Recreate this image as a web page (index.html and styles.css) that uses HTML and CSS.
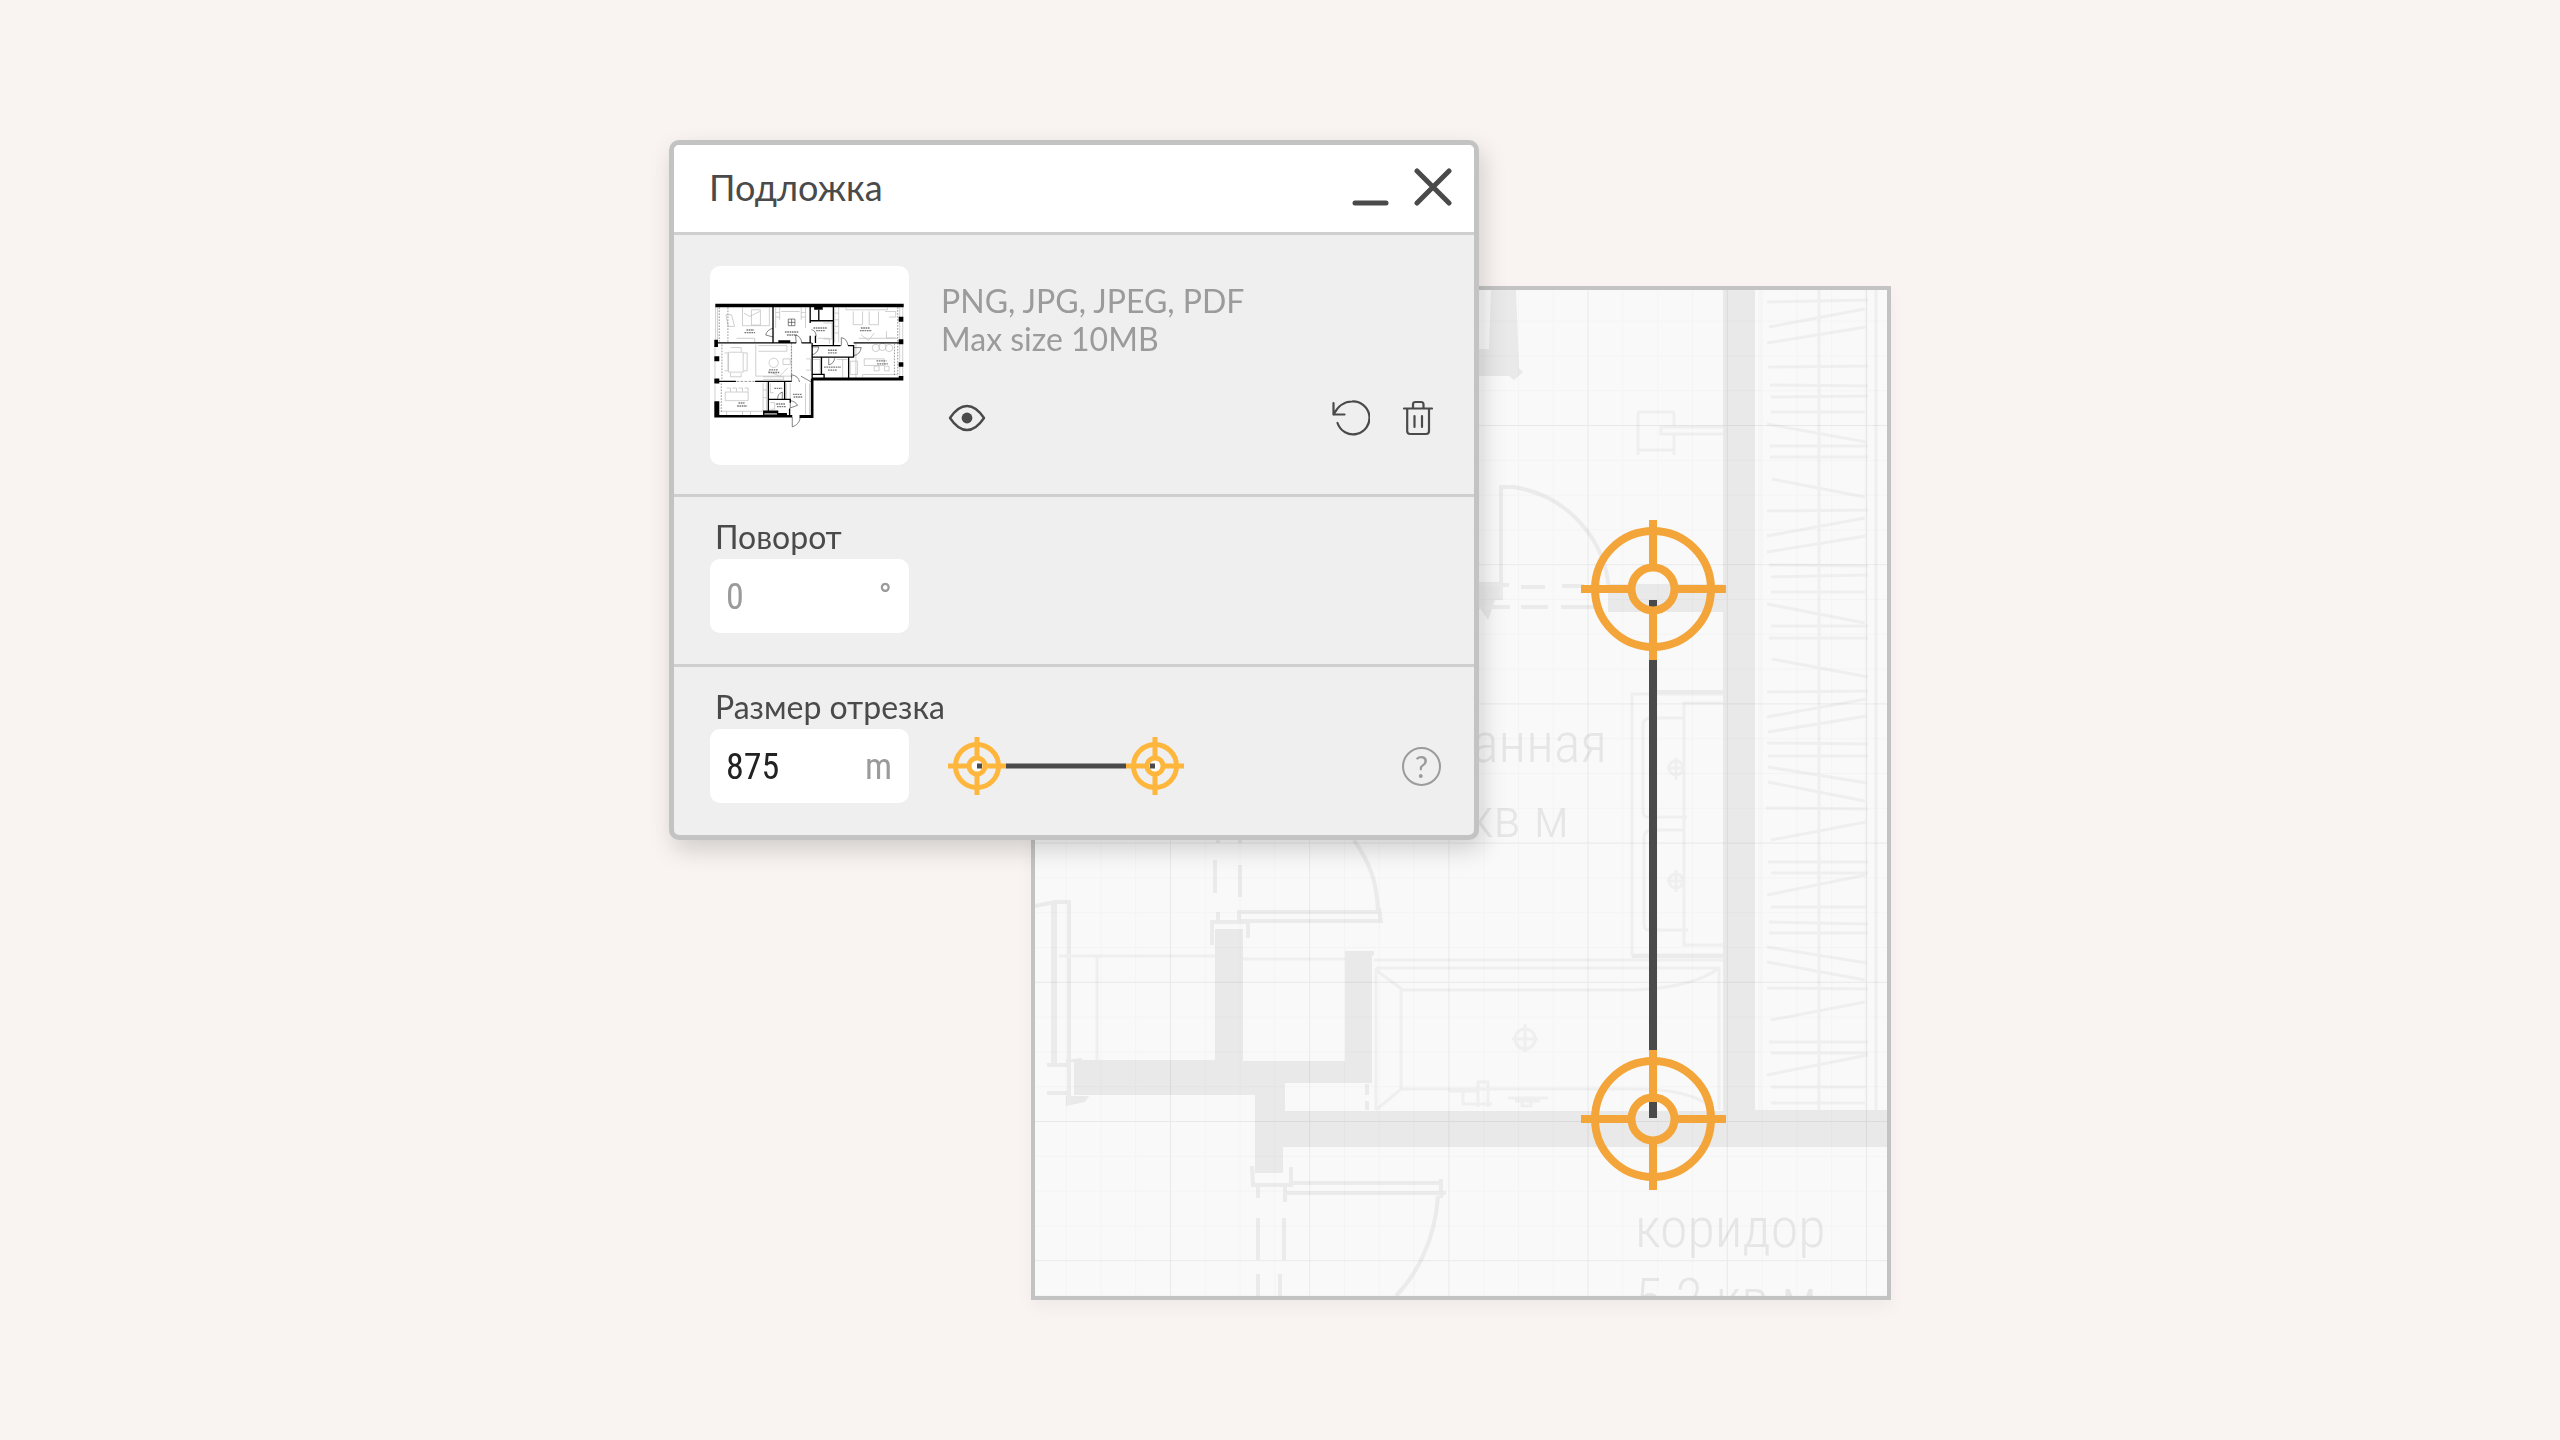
FILE: index.html
```html
<!DOCTYPE html>
<html lang="ru">
<head>
    <meta charset="UTF-8">
    <meta name="viewport" content="width=device-width, initial-scale=1.0">
    <title>Подложка</title>
    <link rel="stylesheet" href="styles.css">
</head>
<body>
    <main class="scene">
        <div class="plan">
            <svg class="plan-drawing" viewBox="0 0 852 1006" role="img" aria-label="План помещения">
                <defs>
                    <pattern id="grid-minor" x="30.6" y="30.6" width="34.8" height="34.8" patternUnits="userSpaceOnUse">
                        <path d="M0 .5H34.8M.5 0V34.8" stroke="#fafafa" fill="none"/>
                    </pattern>
                    <pattern id="grid-major" x="135" y="135" width="139.2" height="139.2" patternUnits="userSpaceOnUse">
                        <path d="M0 .5H139.2M.5 0V139.2" stroke="#f4f4f4" fill="none"/>
                    </pattern>
                    <g id="target">
                        <circle r="58"/>
                        <circle r="21.5"/>
                        <path d="M-72 0H-21M21 0H73M0 -69V-21M0 21V71"/>
                    </g>
                </defs>

                <!-- walls -->
                <g class="walls">
                    <path d="M688 0H720V820H852V857H248V883H220V805H39V770H180V639H208V771H310V661H339V665L337 666V793H250V821H688V322H573V294H688Z"/>
                    <path d="M456 0H481L484 78L488 82L479 90L474 86H420V59H454Z"/>
                    <path d="M420 292H468V310H460L453 330L445 318H420Z"/>
                    <path d="M31 770L47 768V772H31ZM31 806H54L50 812L31 816Z"/>
                </g>

                <!-- doors and openings -->
                <g class="lines lines-thick">
                    <path d="M466 197V307"/>
                    <path d="M464 197H478A112 112 0 0 1 574 300"/>
                    <path d="M440 295H474M486 297H510M527 296H549M440 317H475M486 317H513M526 317H560"/>
                    <path d="M204 622H346M204 631H346M204 620V634M344 618L346 633"/>
                    <path d="M319 550C334 572 342 590 343 622"/>
                    <path d="M177 655V632H213V648M183 622V632"/>
                    <path d="M180 570V603M205 575V607M183 550V553M205 550V553"/>
                    <path d="M217 876L218 895H256V877M223 895V908M250 895V912"/>
                    <path d="M256 893H406M252 903H411M406 889V908"/>
                    <path d="M403 906C400 950 382 984 361 1006"/>
                    <path d="M223 928V970M249 928V970M223 984V1006M245 984V1006"/>
                    <path d="M332 794V805M332 811V820"/>
                    <path d="M0 616L20 612H34V815M12 775H36M12 803H34"/>
                </g>
                <path class="lines lines-heavy" d="M19 612V775"/>

                <!-- bathroom fittings -->
                <g class="lines">
                    <path d="M603 122V165M639 122V137M639 144V165M603 122H639M603 160H639M688 137H626V144H688"/>
                    <path d="M688 404H597V665H688M688 413H649V655H688"/>
                    <path d="M649 428H616Q608 428 608 436V519Q608 527 612 527H652"/>
                    <path d="M649 540H617Q609 540 609 548V632Q609 640 613 640H653"/>
                    <circle cx="641" cy="478" r="7"/>
                    <circle cx="641" cy="591" r="7"/>
                    <path d="M641 468V490M632 478H649M641 580V602M632 591H649"/>
                    <path d="M339 670H688M341 678H684V820M341 678V820M341 680L368 700H600Q660 697 684 678M366 700V799M341 820L366 799H600Q655 799 676 817"/>
                    <circle cx="490" cy="749" r="10"/>
                    <path d="M490 734V762M477 749H503"/>
                    <path d="M443 817V792H453V817M443 801H428V814H457M414 801H428M473 808H513M480 811H505M487 812V816H496V812"/>
                    <path d="M24 666H180M62 666V770M208 669H310"/>
                </g>
                <path class="lines lines-thick" d="M622 402H688M597 666H688"/>

                <!-- wardrobe -->
                <path class="lines" d="M784 0V820M841 0V820"/>
                <path class="lines lines-faint" d="M725 0V820M831 0V820"/>
                <path class="lines" d="M732 12L833 10M734 37L830 19M732 53L831 37M733 77L833 76M735 95L833 96M736 107L833 106M736 122H830M732 134L831 152M735 156H833M735 167H833M737 189L830 207M732 221L833 220M732 246L830 228M732 262L831 246M734 275L833 276M736 287L833 285M736 302H830M732 314L830 333M736 336H833M734 348H833M737 369L833 387M732 402L833 401M732 427L831 409M733 442L832 426M732 453L833 454M733 466H833M733 477L832 493M733 492L830 511M731 518L833 519M736 550L831 532M733 572H833M736 583H833M732 605L831 585M736 617H831M734 632L833 634M734 643H833M732 657L832 673M732 672L830 690M732 698L833 699M736 730L830 712M734 752H833M736 763H833M732 785L833 765M736 797H831M736 813H830"/>

                <g class="room">
                    <text x="572" y="472" text-anchor="end">ванная</text>
                    <text x="534" y="547" text-anchor="end">кв м</text>
                    <text x="600" y="957">коридор</text>
                    <text x="600" y="1028">5.2 кв м</text>
                </g>

                <rect width="852" height="1006" fill="url(#grid-minor)" class="grid"/>
                <rect width="852" height="1006" fill="url(#grid-major)" class="grid"/>

                <!-- measured segment -->
                <path class="segment" d="M618 310V828"/>
                <path class="segment-gap" d="M618 317V370M618 760V812"/>
                <use href="#target" class="target" x="618" y="299"/>
                <use href="#target" class="target" x="618" y="829"/>
            </svg>
        </div>

        <section class="panel">
            <header class="panel-header">
                <h1 class="panel-title">Подложка</h1>
                <div class="panel-controls">
                    <button class="icon-btn" type="button" aria-label="Свернуть">
                        <svg width="38" height="38" viewBox="0 0 38 38"><path d="M4 35H35" stroke-width="5"/></svg>
                    </button>
                    <button class="icon-btn" type="button" aria-label="Закрыть">
                        <svg width="38" height="38" viewBox="0 0 38 38"><path d="M3 3L35 35M35 3L3 35" stroke-width="5"/></svg>
                    </button>
                </div>
            </header>

            <div class="section upload">
                <div class="thumb">
                    <svg viewBox="30 18 600 600" role="img" aria-label="Миниатюра плана">
                        <g fill="none" stroke="#b8b8b8" stroke-width="2">
                            <path d="M128 143V198H209V143M155 150H182V196H155ZM132 160L150 170L180 155M78 165L85 200H104L95 165Z"/>
                            <path d="M110 236H165V248M228 143V205M240 143V180M318 143V205M305 143V180M228 158H240M228 172H240M305 158H318M305 172H318M245 155H300"/>
                            <path d="M86 278H130V338H86ZM92 264H124V276M92 340V352H124V342M74 280H84V334H74M132 280H142V334H132"/>
                            <path d="M168 255V350H275V255M176 258H262V275H176M250 298H272V315H250ZM190 360H252V352H190M320 298H334V332H320M205 335L240 350L265 325"/>
                            <circle cx="222" cy="310" r="14"/>
                            <path d="M76 398H145V424H76ZM80 386H92V397M98 386H110V397M116 386H128V397M134 386H145V397M64 456H190M80 456V468M128 456V468M152 456V468M190 370V455M200 370V455M190 392H200M190 415H200"/>
                            <path d="M406 143V248M418 143V248M406 160H418M406 180H418M406 200H418M406 220H418M440 143V150H565V143M462 155V195H490V155M510 155V195H538V155M558 155H590V172H570M485 225L508 243L525 220M562 215V235H590"/>
                            <path d="M478 236H595M470 248V356M490 352V345H595M453 305H475V345H453ZM495 298H555V318H495ZM525 320H540V334H525ZM556 320H570V334H556Z"/>
                            <circle cx="530" cy="265" r="11"/><circle cx="550" cy="262" r="11"/><circle cx="570" cy="265" r="11"/>
                            <path d="M372 190H398V238H372M355 236H390V252M430 298V354M412 300H444M260 372V420M272 372V420M318 372V466M330 372V466M212 372V400H222M212 430H225V450H212M340 300H362V342"/>
                            <path d="M47 140V240M53 140V240M45 258V290M45 306V356M45 375V425M602 142V172M611 142V172M602 188V238M611 188V238M602 254V306M611 254V306M602 322V350M611 322V350"/>
                        </g>
                        <path d="M58 143V246M84 143V246M66 255V362M64 372V462M596 142V350M586 252V350M276 250V355" fill="none" stroke="#666" stroke-width="2" stroke-dasharray="5 4"/>
                        <path d="M140 211H163M134 219H166M256 217H296M262 226H292M342 205H382M350 213H378M485 205H512M482 213H518M386 272H412M386 280H412M208 331H236M206 339H240M374 323H425M386 332H412M532 304H562M534 313H566M280 405H308M282 413H310M224 387H248M230 434H256M232 442H260M116 431H134M112 440H142" fill="none" stroke="#777" stroke-width="4" stroke-dasharray="5 2"/>
                        <g fill="none" stroke="#444" stroke-width="2">
                            <path d="M266 178H286V198H266ZM266 188H286M276 178V198"/>
                            <path d="M220 206C208 208 200 216 198 226L220 232M307 250C305 236 298 228 288 226L290 250M336 262H358C356 276 348 284 336 286M446 258C444 244 438 236 426 234V258M462 264H486C484 278 476 286 464 288M388 296V316C398 314 404 308 406 296M336 368L304 350M276 366V346C290 348 298 356 300 368M272 424V446L294 438C290 430 282 426 272 424M278 474V503C292 498 300 490 302 474M234 418C234 408 238 402 248 398V420M336 210C346 212 350 220 350 230"/>
                        </g>
                        <g fill="none" stroke="#000" stroke-width="4">
                            <path d="M220 138V250M45 250H290M306 250H336M332 138V190M332 228V250M332 183H401M358 150V183M402 138V258M337 258H424M446 258H463V294M337 293H463M463 250H606M448 294V358M366 294V345M337 345H374V358M45 366H108M166 366H276M206 366V470M255 366V420M206 420H272V430M270 448V468M348 228V250"/>
                        </g>
                        <path d="M46 132H614V142H46ZM336 354H613V363H342V476H300V467H334V358H336ZM43 426H58V467H278V475H43ZM43 240H54V262H43ZM43 290H58V305H43ZM43 357H58V372H43ZM599 171H613V186H599ZM599 239H613V254H599ZM599 308H613V322H599ZM599 350H613V362H599ZM336 250H340V356H336ZM236 242H272V250H236ZM190 454H236V461H262V468H190ZM344 140H370V150H344Z"/>
                        <path d="M194 464H232" stroke="#fff" stroke-width="3"/>
                        <path d="M110 366H164" stroke="#999" stroke-width="3" stroke-dasharray="8 4"/>
                    </svg>
                </div>
                <div class="upload-info">
                    <p class="hint">PNG, JPG, JPEG, PDF<br>Max size 10MB</p>
                    <div class="actions">
                        <button class="icon-btn" type="button" aria-label="Показать">
                            <svg width="38" height="36" viewBox="0 0 38 36">
                                <path d="M2 18C8 9 13 6 19 6S30 9 36 18C30 27 25 30 19 30S8 27 2 18Z" stroke-width="2.4"/>
                                <circle cx="19" cy="18" r="5.4" class="pupil"/>
                            </svg>
                        </button>
                        <button class="icon-btn push-right" type="button" aria-label="Повернуть">
                            <svg width="38" height="36" viewBox="0 0 38 36">
                                <path d="M1.500 3V14.500H12.500M1.500 14.500C6 6 13 1.500 20 1.500A16.400 16.400 0 1 1 5.500 23" stroke-width="2.200"/>
                            </svg>
                        </button>
                        <button class="icon-btn" type="button" aria-label="Удалить">
                            <svg width="30" height="36" viewBox="0 0 30 36">
                                <path d="M1 8.500H29M4.200 8.500V31Q4.200 34 7.200 34H23Q26 34 26 31V8.500M10 8.500V4.500Q10 2 12.500 2H18Q20.500 2 20.500 4.500V8.500M11.500 16V27M19 16V27" stroke-width="2.200"/>
                            </svg>
                        </button>
                    </div>
                </div>
            </div>

            <div class="section">
                <label class="label" for="angle">Поворот</label>
                <div class="field">
                    <input class="field-input" id="angle" type="text" placeholder="0">
                    <span class="unit">°</span>
                </div>
            </div>

            <div class="section">
                <label class="label" for="length">Размер отрезка</label>
                <div class="row">
                    <div class="field">
                        <input class="field-input" id="length" type="text" value="875">
                        <span class="unit">m</span>
                    </div>
                    <svg class="segment-icon" width="236" height="58" viewBox="0 0 236 58" aria-hidden="true">
                        <defs>
                            <g id="target-small">
                                <circle r="21.500"/>
                                <circle r="8" fill="#fff"/>
                                <path d="M-29 0H-8M8 0H29M0 -29V-8M0 8V29"/>
                            </g>
                        </defs>
                        <path class="segment-small" d="M58 29H178"/>
                        <use href="#target-small" x="29" y="29"/>
                        <use href="#target-small" x="207" y="29"/>
                        <path class="segment-small" d="M29 29H34M202 29H207"/>
                    </svg>
                    <button class="help" type="button" aria-label="Справка">?</button>
                </div>
            </div>
        </section>
    </main>
</body>
</html>
```
FILE: styles.css
```css
* {
    box-sizing: border-box;
}

body {
    display: flex;
    justify-content: center;
    align-items: center;
    min-height: 100vh;
    margin: 0;
    background-color: #f9f4f1;
    color: #4a4a4a;
    font-family: Lato, "Noto Sans", sans-serif;
}

/* the panel overlaps the top left corner of the plan */
.scene {
    display: grid;
    grid-template-columns: 362fr 448fr 412fr;
    grid-template-rows: 146px auto 460px;
    width: 100%;
    max-width: 1222px;
}

.plan {
    grid-column: 2 / 4;
    grid-row: 2 / 4;
    border: 4px solid #c3c3c3;
    background-color: #f9f9f9;
    box-shadow: 0 8px 16px rgba(0, 0, 0, 0.04);
}

.plan-drawing {
    display: block;
    width: 100%;
}

.walls {
    fill: #e9e9e9;
}

.lines {
    fill: none;
    stroke: #efefef;
    stroke-width: 3;
}

.lines-thick {
    stroke: #ebebeb;
    stroke-width: 4;
}

.lines-heavy {
    stroke: #ebebeb;
    stroke-width: 6;
}

.lines-faint {
    stroke: #f6f6f6;
}

.grid {
    mix-blend-mode: multiply;
}

.room {
    fill: #e6e6e6;
    font-family: "Liberation Sans Narrow", "Roboto Condensed", Roboto, sans-serif;
    font-size: 56px;
    font-weight: 300;
}

.segment {
    stroke: #4a4a4a;
    stroke-width: 8;
}

.segment-gap {
    stroke: #f3a53a;
    stroke-width: 8;
}

.target {
    fill: none;
    stroke: #f3a53a;
    stroke-width: 8;
}

.panel {
    grid-column: 1 / 3;
    grid-row: 1 / 3;
    z-index: 1;
    border: 5px solid #c3c3c3;
    border-radius: 10px;
    background-color: #efefef;
    box-shadow: 4px 10px 24px rgba(0, 0, 0, 0.16);
}

.panel-header {
    display: flex;
    justify-content: space-between;
    align-items: center;
    height: 87px;
    padding: 0 22px 4px 35px;
    border-radius: 5px 5px 0 0;
    background-color: #fff;
}

.panel-title {
    margin: 0;
    font-size: 36px;
    font-weight: 400;
    line-height: 44px;
}

.panel-controls {
    display: flex;
    gap: 25px;
}

.icon-btn {
    display: block;
    padding: 0;
    border: 0;
    background: none;
    color: #4a4a4a;
    cursor: pointer;
}

.icon-btn svg {
    display: block;
    fill: none;
    stroke: currentColor;
    stroke-linecap: round;
    stroke-linejoin: round;
}

.icon-btn .pupil {
    fill: currentColor;
    stroke: none;
}

.section {
    padding: 20px 33px 31px 36px;
    border-top: 3px solid #cfcfcf;
}

.upload {
    display: flex;
    gap: 32px;
    padding: 31px 41px 29px 36px;
}

.thumb {
    flex: none;
    width: 199px;
    height: 199px;
    border-radius: 10px;
    background-color: #fff;
}

.thumb svg {
    display: block;
    width: 100%;
}

.upload-info {
    flex: 1;
    padding-top: 16px;
}

.hint {
    margin: 0 0 42px;
    color: #9b9b9b;
    font-size: 32px;
    line-height: 38px;
}

.actions {
    display: flex;
    gap: 33px;
    padding-left: 7px;
}

.push-right {
    margin-left: auto;
}

.label {
    display: block;
    margin-bottom: 2px;
    padding-left: 5px;
    font-size: 32px;
    line-height: 40px;
}

.row {
    display: flex;
    align-items: center;
}

.field {
    display: flex;
    align-items: center;
    width: 199px;
    height: 74px;
    padding: 2px 17px 0 16px;
    border-radius: 10px;
    background-color: #fff;
    font-family: "Liberation Sans Narrow", "Roboto Condensed", Roboto, sans-serif;
    font-size: 36px;
}

.field-input {
    flex: 1;
    min-width: 0;
    padding: 0;
    border: 0;
    outline: none;
    background: none;
    color: #222;
    font: inherit;
}

.field-input::placeholder,
.unit {
    color: #9b9b9b;
    opacity: 1;
}

.segment-icon {
    margin-left: 39px;
    fill: none;
    stroke: #ffb63d;
    stroke-width: 5;
}

.segment-small {
    stroke: #4a4a4a;
}

.help {
    width: 39px;
    height: 39px;
    margin-left: auto;
    padding: 0;
    border: 2px solid #9b9b9b;
    border-radius: 50%;
    background: none;
    color: #9b9b9b;
    font-family: Lato, "Noto Sans", sans-serif;
    font-size: 30px;
    line-height: 34px;
    cursor: pointer;
}
```
